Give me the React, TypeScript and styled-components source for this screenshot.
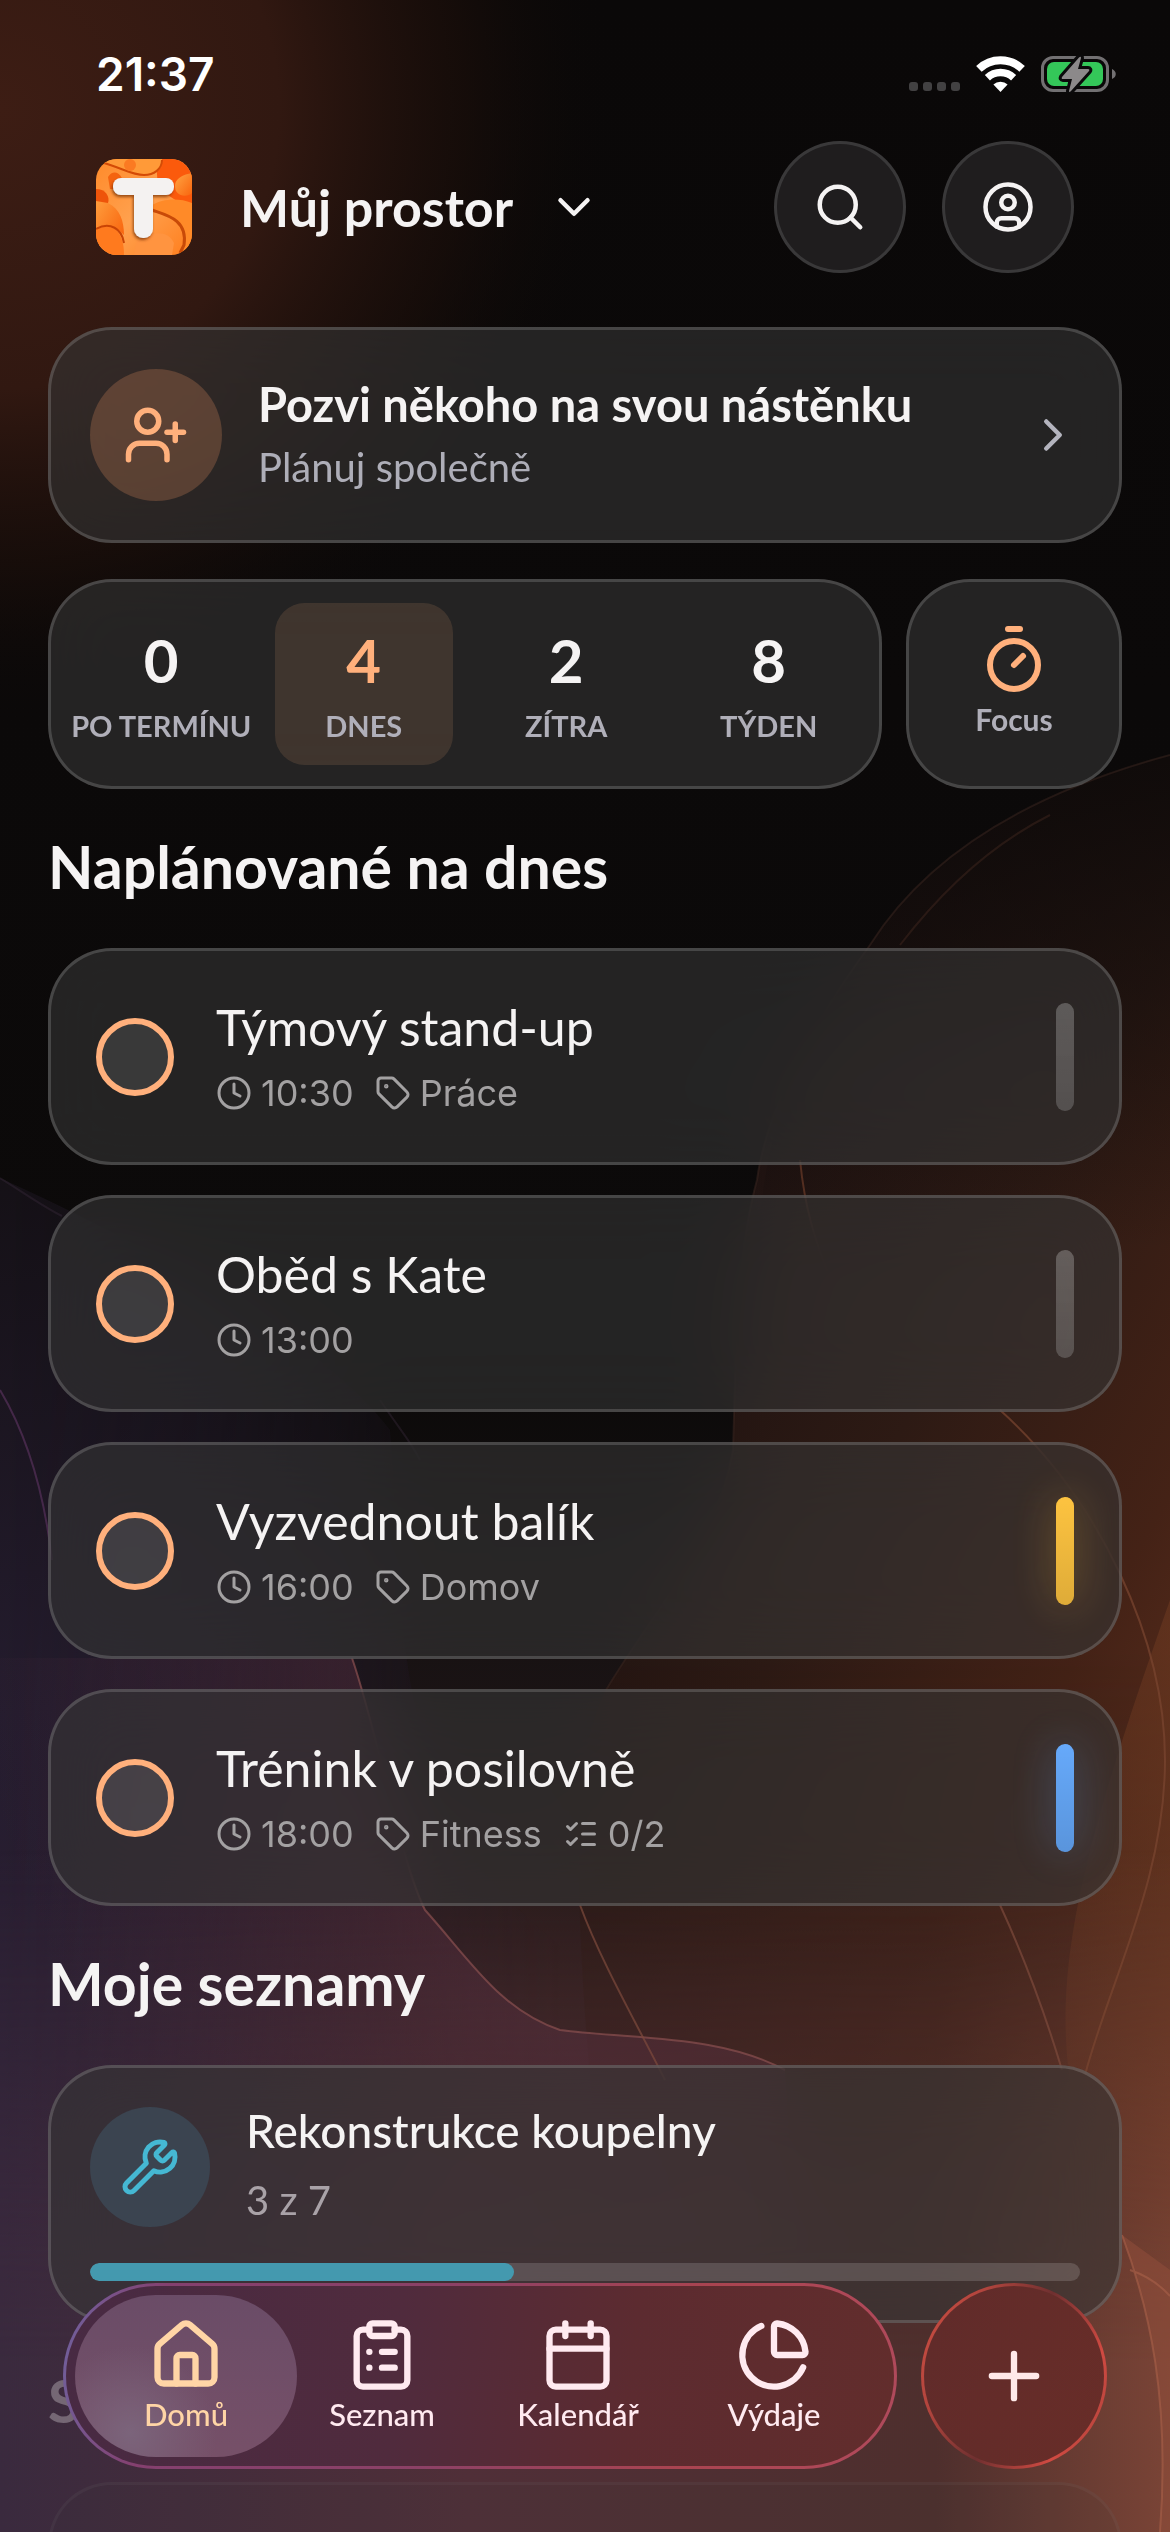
import { useState } from "react";
import styled, { createGlobalStyle, css } from "styled-components";
import {
    Calendar,
    ChartPie,
    ChevronDown,
    ChevronRight,
    CircleUser,
    ClipboardList,
    Clock,
    House,
    ListChecks,
    Plus,
    Search,
    Tag,
    Timer,
    UserPlus,
    Wrench,
} from "lucide-react";

const GlobalStyle = createGlobalStyle`
    * {
        box-sizing: border-box;
    }
    body {
        margin: 0;
        background: #0a0808;
    }
    body, button, input {
        font-family: Lato, "Noto Sans", sans-serif;
    }
    button {
        border: none;
        padding: 0;
        background: none;
        color: inherit;
        cursor: pointer;
    }
    svg {
        display: block;
        flex-shrink: 0;
    }
`;

const glass = css`
    background-color: rgba(54, 54, 54, 0.6);
    border: 3px solid rgba(255, 255, 255, 0.16);
    border-radius: 64px;
    backdrop-filter: blur(36px);
`;

const Page = styled.div`
    position: relative;
    height: 100vh;
    overflow: hidden;
    color: #f5f3f3;
`;

const Backdrop = styled.svg`
    position: absolute;
    inset: 0;
    width: 100%;
    height: 100%;
`;

const Screen = styled.div`
    position: relative;
`;

const StatusBar = styled.div`
    display: flex;
    align-items: center;
    justify-content: space-between;
    height: 141px;
    padding: 6px 54px 0 96px;
`;

const Time = styled.span`
    font-family: Inter, sans-serif;
    font-size: 46px;
    font-weight: 600;
    color: #fff;
`;

const StatusIcons = styled.div`
    display: flex;
    align-items: center;
    gap: 16px;
`;

const Header = styled.header`
    display: flex;
    align-items: center;
    height: 132px;
    padding: 0 96px;
`;

const SpaceButton = styled.button`
    display: flex;
    align-items: center;
    gap: 34px;
    margin-left: 48px;
    font-size: 52px;
    font-weight: 700;
    line-height: 66px;
`;

const HeaderActions = styled.div`
    display: flex;
    gap: 36px;
    margin-left: auto;
`;

const RoundButton = styled.button`
    display: grid;
    place-items: center;
    width: 132px;
    height: 132px;
    border: 3px solid rgba(255, 255, 255, 0.12);
    border-radius: 50%;
    background: rgba(33, 32, 33, 0.9);
`;

const Main = styled.main`
    padding: 54px 48px 0;
`;

const InviteCard = styled.button`
    ${glass}
    display: flex;
    align-items: center;
    width: 100%;
    height: 216px;
    padding: 0 39px;
    text-align: left;
`;

const IconCircle = styled.span<{ $size: number; $bg: string; $color: string }>`
    display: grid;
    place-items: center;
    flex-shrink: 0;
    width: ${(p) => p.$size}px;
    height: ${(p) => p.$size}px;
    border-radius: 50%;
    background: ${(p) => p.$bg};
    color: ${(p) => p.$color};
`;

const InviteText = styled.span`
    display: flex;
    flex: 1;
    flex-direction: column;
    gap: 6px;
    margin-left: 36px;
    padding-bottom: 3px;
`;

const InviteTitle = styled.span`
    font-size: 47px;
    font-weight: 700;
    line-height: 60px;
`;

const Subtitle = styled.span`
    font-size: 40px;
    line-height: 54px;
    color: #aeaeb8;
`;

const Chevron = styled(ChevronRight)`
    color: #b4b4be;
`;

const StatsRow = styled.div`
    display: flex;
    gap: 24px;
    margin-top: 36px;
`;

const StatsCard = styled.div`
    ${glass}
    display: grid;
    grid-template-columns: repeat(4, minmax(0, 1fr));
    gap: 24px;
    flex: 1;
    height: 210px;
    padding: 21px;
`;

const Stat = styled.button<{ $active?: boolean }>`
    display: flex;
    flex-direction: column;
    align-items: center;
    justify-content: center;
    padding-top: 12px;
    border-radius: 30px;
    background: ${(p) => (p.$active ? "rgba(255, 176, 124, 0.13)" : "none")};
    color: ${(p) => (p.$active ? "#ffb07c" : "inherit")};
`;

const StatValue = styled.span`
    font-size: 60px;
    font-weight: 700;
    line-height: 72px;
`;

const StatLabel = styled.span`
    font-size: 29px;
    font-weight: 700;
    line-height: 60px;
    white-space: nowrap;
    color: #b0afb9;
`;

const FocusCard = styled.button`
    ${glass}
    display: flex;
    flex-direction: column;
    align-items: center;
    justify-content: center;
    width: 216px;
    height: 210px;
    padding-bottom: 3px;
    color: #ffb07c;
`;

const FocusLabel = styled(StatLabel)`
    font-size: 30px;
    line-height: 48px;
`;

const SectionTitle = styled.h2<{ $faded?: boolean }>`
    margin: 0;
    padding: 45px 0 48px;
    font-size: 59px;
    font-weight: 700;
    line-height: 66px;
    opacity: ${(p) => (p.$faded ? 0.3 : 1)};
`;

const TaskList = styled.ul`
    display: flex;
    flex-direction: column;
    gap: 30px;
    margin: 0;
    padding: 0;
    list-style: none;
`;

const TaskCard = styled.li`
    ${glass}
    display: flex;
    align-items: center;
    height: 217px;
    padding: 0 45px;
`;

const Check = styled.input`
    appearance: none;
    flex-shrink: 0;
    width: 78px;
    height: 78px;
    margin: 0;
    border: 6px solid #ffb07c;
    border-radius: 50%;
    background: rgba(255, 255, 255, 0.1);

    &:checked {
        background: #ffb07c;
    }
`;

const TaskBody = styled.div`
    display: flex;
    flex: 1;
    flex-direction: column;
    gap: 12px;
    margin-left: 42px;
`;

const TaskTitle = styled.label`
    font-size: 50px;
    line-height: 60px;
`;

const MetaRow = styled.div`
    display: flex;
    gap: 21px;
`;

const Meta = styled.span`
    display: flex;
    align-items: center;
    gap: 9px;
    font-family: Inter, sans-serif;
    font-size: 36px;
    line-height: 48px;
    color: #a3a1a2;
`;

const Priority = styled.span<{ $color?: string }>`
    width: 18px;
    height: 108px;
    border-radius: 9px;
    background: ${(p) => p.$color || "rgba(255, 255, 255, 0.24)"};
    background-image: linear-gradient(rgba(0, 0, 0, 0), rgba(0, 0, 0, 0.12));
    box-shadow: ${(p) => (p.$color ? `0 0 42px ${p.$color}55` : "none")};
`;

const ListCard = styled.article`
    ${glass}
    height: 258px;
    padding: 39px 39px 0;
`;

const ListHead = styled.div`
    display: flex;
    gap: 36px;
    height: 120px;
`;

const ListTitle = styled.h3`
    margin: 0;
    font-size: 46px;
    font-weight: 500;
    line-height: 48px;
`;

const ListCount = styled.p`
    margin: 18px 0 0;
    font-size: 40px;
    line-height: 54px;
    color: #a9a2a8;
`;

const Progress = styled.div`
    height: 18px;
    margin-top: 36px;
    border-radius: 9px;
    background: rgba(255, 255, 255, 0.15);
    overflow: hidden;
`;

const ProgressFill = styled.div`
    height: 100%;
    border-radius: 9px;
    background: #4499af;
`;

const FadedCard = styled.div`
    height: 258px;
    border: 3px solid rgba(255, 255, 255, 0.04);
    border-radius: 64px;
    background: rgba(54, 54, 54, 0.12);
`;

const BottomBar = styled.div`
    position: fixed;
    right: 63px;
    bottom: 63px;
    left: 63px;
    display: flex;
    gap: 24px;
`;

const Tabs = styled.nav`
    display: flex;
    flex: 1;
    height: 186px;
    padding: 9px 22px;
    border: 3px solid transparent;
    border-radius: 93px;
    background:
        linear-gradient(95deg, #482a43 0%, #502b3d 40%, #5c2b30 68%, #622d2c 100%) padding-box,
        linear-gradient(100deg, #6f62a0 0%, #84406f 12%, #8c4166 45%, #a94450 75%, #b04a5c 100%) border-box;
`;

const Tab = styled.a<{ $active?: boolean }>`
    display: flex;
    flex: 1 1 0;
    flex-direction: column;
    align-items: center;
    margin: 0 ${(p) => (p.$active ? "-13px" : "0")};
    padding: 22px ${(p) => (p.$active ? "13px" : "0")} 0;
    border-radius: 81px;
    background: ${(p) =>
        p.$active ? "radial-gradient(circle at 25% 85%, #7b647b, rgba(123, 100, 123, 0) 40%), linear-gradient(#6a4c67, #765068)" : "none"};
    color: ${(p) => (p.$active ? "#ffd5a6" : "#ffeaf0")};
    font-size: 31px;
    font-weight: 500;
    line-height: 36px;
    text-decoration: none;
`;

const AddButton = styled.button`
    display: grid;
    place-items: center;
    width: 186px;
    height: 186px;
    border: 3px solid transparent;
    border-radius: 50%;
    background:
        linear-gradient(110deg, #602b2a, #682d28) padding-box,
        linear-gradient(115deg, #d04f42 0%, #b0443d 25%, #6f3030 50%, #d04a42 78%, #a8423a 100%) border-box;
    color: #ffe9e9;
`;

const TabLabel = styled.span`
    margin-top: 3px;
`;

const Waves = () => (
    <Backdrop viewBox="0 0 1170 2532" preserveAspectRatio="none" aria-hidden="true">
        <defs>
            <radialGradient id="ember" gradientUnits="userSpaceOnUse" cx="0" cy="110" r="620">
                <stop offset="0" stopColor="#3d1d14" />
                <stop offset="0.45" stopColor="#311811" />
                <stop offset="0.75" stopColor="#1a0e0a" stopOpacity="0.7" />
                <stop offset="1" stopColor="#0a0808" stopOpacity="0" />
            </radialGradient>
            <linearGradient id="base" x1="0" y1="0" x2="0" y2="1">
                <stop offset="0" stopColor="#0a0808" />
                <stop offset="0.55" stopColor="#0c0a0a" />
                <stop offset="0.68" stopColor="#1b1415" />
                <stop offset="0.8" stopColor="#33201f" />
                <stop offset="1" stopColor="#4a2c2e" />
            </linearGradient>
            <linearGradient id="violet" gradientUnits="userSpaceOnUse" x1="0" y1="1150" x2="200" y2="2532">
                <stop offset="0" stopColor="#141015" />
                <stop offset="0.4" stopColor="#241c2e" />
                <stop offset="0.65" stopColor="#2c2034" />
                <stop offset="1" stopColor="#422b40" />
            </linearGradient>
            <linearGradient id="fadeRight" gradientUnits="userSpaceOnUse" x1="0" y1="0" x2="560" y2="0">
                <stop offset="0" stopColor="#fff" />
                <stop offset="0.35" stopColor="#bbb" />
                <stop offset="0.75" stopColor="#333" />
                <stop offset="1" stopColor="#000" />
            </linearGradient>
            <mask id="violetMask">
                <rect width="1170" height="2532" fill="url(#fadeRight)" />
            </mask>
            <linearGradient id="rust" gradientUnits="userSpaceOnUse" x1="600" y1="1350" x2="1260" y2="1720">
                <stop offset="0" stopColor="#1c1110" />
                <stop offset="0.4" stopColor="#2d1a14" />
                <stop offset="0.75" stopColor="#442216" />
                <stop offset="1" stopColor="#5b2e1d" />
            </linearGradient>
            <linearGradient id="rustTop" gradientUnits="userSpaceOnUse" x1="0" y1="760" x2="0" y2="1250">
                <stop offset="0" stopColor="#0a0808" stopOpacity="0.8" />
                <stop offset="1" stopColor="#0a0808" stopOpacity="0" />
            </linearGradient>
            <linearGradient id="rustSide" gradientUnits="userSpaceOnUse" x1="0" y1="1650" x2="0" y2="1960">
                <stop offset="0" stopColor="#fff" />
                <stop offset="1" stopColor="#999" />
            </linearGradient>
            <mask id="rustMask">
                <rect width="1170" height="2532" fill="url(#rustSide)" />
            </mask>
            <linearGradient id="floor" gradientUnits="userSpaceOnUse" x1="0" y1="0" x2="1170" y2="0">
                <stop offset="0" stopColor="#3a2a3e" />
                <stop offset="0.4" stopColor="#502f38" />
                <stop offset="0.8" stopColor="#4e2f2d" />
                <stop offset="1" stopColor="#7a4436" />
            </linearGradient>
            <linearGradient id="floorFade" x1="0" y1="0" x2="0" y2="1">
                <stop offset="0" stopColor="#000" />
                <stop offset="0.75" stopColor="#fff" />
            </linearGradient>
            <mask id="floorMask">
                <rect y="1850" width="1170" height="682" fill="url(#floorFade)" />
            </mask>
            <linearGradient id="rose" gradientUnits="userSpaceOnUse" x1="80" y1="2050" x2="520" y2="1900">
                <stop offset="0" stopColor="#5c3044" stopOpacity="0" />
                <stop offset="1" stopColor="#5c3044" stopOpacity="0.5" />
            </linearGradient>
            <linearGradient id="glow" gradientUnits="userSpaceOnUse" x1="900" y1="0" x2="1170" y2="0">
                <stop offset="0" stopColor="#6b3820" stopOpacity="0" />
                <stop offset="1" stopColor="#6b3820" stopOpacity="0.6" />
            </linearGradient>
        </defs>
        <rect width="1170" height="2532" fill="url(#base)" />
        <rect width="700" height="800" fill="url(#ember)" />
        <path
            d="M1170 755C1040 790 930 850 870 945C800 1040 765 1120 757 1180C735 1260 736 1360 733 1450C715 1550 660 1600 606 1690C570 1760 560 1900 640 2532H1170Z"
            fill="url(#rust)"
            mask="url(#rustMask)"
        />
        <path d="M1170 755C1040 790 930 850 870 945C800 1040 765 1120 757 1250H1170Z" fill="url(#rustTop)" />
        <path d="M1170 1600C1100 1800 1050 1950 1070 2080V2300H1170Z" fill="url(#glow)" />
        <path
            d="M0 1178C180 1260 330 1350 390 1430C400 1540 390 1700 460 1840C540 1960 700 2040 800 2080V2532H0Z"
            fill="url(#violet)"
            mask="url(#violetMask)"
        />
        <path d="M352 1658C380 1740 400 1860 425 1910C470 1960 500 2010 560 2030C640 2040 720 2035 785 2070L800 2300L0 2400V1658Z" fill="url(#rose)" />
        <rect y="1850" width="1170" height="682" fill="url(#floor)" mask="url(#floorMask)" />
        <path d="M1122 2235C1150 2310 1170 2400 1160 2532H1170V2270Z" fill="#8e4d3b" opacity="0.6" />
        <g fill="none" strokeWidth="2">
            <path d="M1170 755C1040 790 930 850 870 945C800 1040 765 1120 757 1180C735 1260 736 1360 733 1450C715 1550 660 1600 606 1690" stroke="#3a2620" opacity="0.5" />
            <path d="M900 945C950 880 1000 840 1050 815" stroke="#4a2c22" opacity="0.4" />
            <path d="M800 1160C804 1200 812 1240 840 1300" stroke="#6a3a28" opacity="0.7" />
            <path d="M1000 1410C1100 1500 1165 1640 1165 1760C1165 1880 1110 1980 1085 2075" stroke="#7a4630" opacity="0.7" />
            <path d="M0 1390C30 1440 45 1500 52 1560" stroke="#55305a" opacity="0.7" />
            <path d="M0 1178C20 1190 40 1205 62 1216M380 1400C400 1430 410 1440 420 1460" stroke="#3a2a3c" opacity="0.4" />
            <path d="M352 1658C380 1740 400 1860 425 1910C470 1960 500 2010 560 2030C640 2040 720 2035 785 2070" stroke="#8a5050" opacity="0.7" />
            <path d="M580 1905C600 1960 640 2030 665 2080M1000 1905C1030 1970 1050 2030 1062 2070" stroke="#7d4a3c" opacity="0.7" />
            <path d="M1122 2235C1150 2310 1170 2400 1160 2532M1130 2270C1145 2275 1160 2285 1170 2296" stroke="#a8604a" opacity="0.6" />
        </g>
    </Backdrop>
);

const Logo = () => (
    <svg width="96" height="96" viewBox="0 0 96 96" role="img" aria-label="Logo">
        <defs>
            <linearGradient id="logoBase" x1="0" y1="0" x2="1" y2="1">
                <stop offset="0" stopColor="#ff8a2a" />
                <stop offset="0.5" stopColor="#ffa14e" />
                <stop offset="1" stopColor="#ff7d1c" />
            </linearGradient>
            <linearGradient id="logoFold" x1="0" y1="0" x2="1" y2="1">
                <stop offset="0" stopColor="#ffa543" />
                <stop offset="1" stopColor="#f9650e" />
            </linearGradient>
            <clipPath id="logoClip">
                <rect width="96" height="96" rx="21" />
            </clipPath>
            <filter id="logoShadow" x="-20%" y="-20%" width="140%" height="140%">
                <feDropShadow dx="-1" dy="2" stdDeviation="1.5" floodColor="#6b2500" floodOpacity="0.7" />
            </filter>
        </defs>
        <g clipPath="url(#logoClip)">
            <rect width="96" height="96" fill="url(#logoBase)" />
            <path d="M60 0H96V52C84 44 72 36 62 30Z" fill="#fb5a0c" />
            <path d="M66 0C68 10 58 16 48 16C36 16 28 10 8 4V0Z" fill="#ff9a38" />
            <path d="M8 4C28 10 36 16 48 16C58 16 66 10 66 1" fill="none" stroke="#d44b06" strokeWidth="2" />
            <circle cx="34" cy="6" r="6" fill="#fb7a22" />
            <path d="M12 18C18 8 30 16 26 30H14Z" fill="#f4630f" />
            <path d="M96 14C84 16 76 22 80 32C84 38 92 38 96 34Z" fill="url(#logoFold)" />
            <path d="M0 30C10 30 14 38 12 44C24 50 28 62 28 76C20 68 12 66 0 68Z" fill="url(#logoFold)" />
            <path d="M0 30C10 30 14 38 12 44L0 42Z" fill="#ee540a" />
            <path d="M0 70C14 62 28 70 28 96H0Z" fill="#ff7a1e" />
            <path d="M0 70C14 62 26 70 28 84" fill="none" stroke="#c94405" strokeWidth="2" />
            <path d="M56 52C72 54 90 62 90 84L86 96H96V44C82 38 66 40 56 46Z" fill="#ff8a28" />
            <path d="M56 51C70 56 92 60 88 86L84 94" fill="none" stroke="#c84a08" strokeWidth="3" />
            <path d="M40 84C52 72 72 70 78 84L76 96H38Z" fill="#ff9440" />
        </g>
        <g fill="#f4f2f1" filter="url(#logoShadow)">
            <rect x="17" y="19" width="61" height="17" rx="8" />
            <rect x="38" y="19" width="19" height="60" rx="9" />
        </g>
    </svg>
);

const SignalDots = () => (
    <svg width="51" height="36" viewBox="0 0 51 36" fill="#424142" aria-hidden="true">
        <rect y="26" width="9" height="9" rx="3" />
        <rect x="14" y="26" width="9" height="9" rx="3" />
        <rect x="28" y="26" width="9" height="9" rx="3" />
        <rect x="42" y="26" width="9" height="9" rx="3" />
    </svg>
);

const Wifi = () => (
    <svg width="49" height="36" viewBox="0 0 49 36" aria-hidden="true">
        <path d="M2.9 12.8A31.3 31.3 0 0 1 46.1 12.8" fill="none" stroke="#fff" strokeWidth="8" />
        <path d="M11.4 21.7A19 19 0 0 1 37.6 21.7" fill="none" stroke="#fff" strokeWidth="7.4" />
        <path d="M24.5 36L17.4 28.6A10 10 0 0 1 31.6 28.6Z" fill="#fff" />
    </svg>
);

const Battery = () => (
    <svg width="75" height="38" viewBox="0 0 75 38" aria-hidden="true">
        <rect x="1.5" y="2.5" width="65" height="33" rx="10.5" fill="none" stroke="#727072" strokeWidth="3" />
        <rect x="6" y="7" width="56" height="24" rx="7" fill="#34c759" />
        <path d="M71 14C76 16 76 22 71 24Z" fill="#727072" />
        <path
            d="M38 2.5L21 22Q20 24 22 24H31L28 36Q28 38 30 36L48 16Q49 14 47 14H37L40 3Q40 1 38 2.5Z"
            fill="#8c898a"
            stroke="#0b0a0b"
            strokeWidth="6"
            strokeLinejoin="round"
            paintOrder="stroke"
        />
    </svg>
);

const stats = [
    { value: 0, label: "PO TERMÍNU" },
    { value: 4, label: "DNES" },
    { value: 2, label: "ZÍTRA" },
    { value: 8, label: "TÝDEN" },
];

const tasks = [
    { id: "standup", title: "Týmový stand-up", time: "10:30", tag: "Práce" },
    { id: "lunch", title: "Oběd s Kate", time: "13:00" },
    { id: "parcel", title: "Vyzvednout balík", time: "16:00", tag: "Domov", color: "#fdc340" },
    { id: "gym", title: "Trénink v posilovně", time: "18:00", tag: "Fitness", steps: "0/2", color: "#66a9fa" },
];

const tabs = [
    { label: "Domů", icon: House },
    { label: "Seznam", icon: ClipboardList },
    { label: "Kalendář", icon: Calendar },
    { label: "Výdaje", icon: ChartPie },
];

const App = () => {
    const [range, setRange] = useState("DNES");
    const done = 3;
    const total = 7;

    return (
        <Page>
            <GlobalStyle />
            <Waves />
            <Screen>
                <StatusBar>
                    <Time>21:37</Time>
                    <StatusIcons>
                        <SignalDots />
                        <Wifi />
                        <Battery />
                    </StatusIcons>
                </StatusBar>
                <Header>
                    <Logo />
                    <SpaceButton>
                        Můj prostor
                        <ChevronDown size={54} />
                    </SpaceButton>
                    <HeaderActions>
                        <RoundButton aria-label="Hledat">
                            <Search size={54} />
                        </RoundButton>
                        <RoundButton aria-label="Profil">
                            <CircleUser size={54} />
                        </RoundButton>
                    </HeaderActions>
                </Header>
                <Main>
                    <InviteCard>
                        <IconCircle $size={132} $bg="rgba(255, 160, 105, 0.22)" $color="#ffb07c">
                            <UserPlus size={66} />
                        </IconCircle>
                        <InviteText>
                            <InviteTitle>Pozvi někoho na svou nástěnku</InviteTitle>
                            <Subtitle>Plánuj společně</Subtitle>
                        </InviteText>
                        <Chevron size={54} />
                    </InviteCard>
                    <StatsRow>
                        <StatsCard>
                            {stats.map((s) => (
                                <Stat key={s.label} $active={range === s.label} onClick={() => setRange(s.label)}>
                                    <StatValue>{s.value}</StatValue>
                                    <StatLabel>{s.label}</StatLabel>
                                </Stat>
                            ))}
                        </StatsCard>
                        <FocusCard>
                            <Timer size={72} />
                            <FocusLabel>Focus</FocusLabel>
                        </FocusCard>
                    </StatsRow>
                    <SectionTitle>Naplánované na dnes</SectionTitle>
                    <TaskList>
                        {tasks.map((t) => (
                            <TaskCard key={t.id}>
                                <Check type="checkbox" id={t.id} />
                                <TaskBody>
                                    <TaskTitle htmlFor={t.id}>{t.title}</TaskTitle>
                                    <MetaRow>
                                        <Meta>
                                            <Clock size={36} />
                                            {t.time}
                                        </Meta>
                                        {t.tag && (
                                            <Meta>
                                                <Tag size={36} />
                                                {t.tag}
                                            </Meta>
                                        )}
                                        {t.steps && (
                                            <Meta>
                                                <ListChecks size={36} />
                                                {t.steps}
                                            </Meta>
                                        )}
                                    </MetaRow>
                                </TaskBody>
                                <Priority $color={t.color} />
                            </TaskCard>
                        ))}
                    </TaskList>
                    <SectionTitle>Moje seznamy</SectionTitle>
                    <ListCard>
                        <ListHead>
                            <IconCircle $size={120} $bg="#3b4450" $color="#45b8d3">
                                <Wrench size={60} />
                            </IconCircle>
                            <div>
                                <ListTitle>Rekonstrukce koupelny</ListTitle>
                                <ListCount>
                                    {done} z {total}
                                </ListCount>
                            </div>
                        </ListHead>
                        <Progress role="progressbar" aria-label="Rekonstrukce koupelny" aria-valuenow={done} aria-valuemax={total}>
                            <ProgressFill style={{ width: `${(done / total) * 100}%` }} />
                        </Progress>
                    </ListCard>
                    <SectionTitle $faded>S</SectionTitle>
                    <FadedCard />
                </Main>
            </Screen>
            <BottomBar>
                <Tabs>
                    {tabs.map(({ label, icon: Icon }, i) => (
                        <Tab key={label} href="#" $active={i === 0}>
                            <Icon size={76} />
                            <TabLabel>{label}</TabLabel>
                        </Tab>
                    ))}
                </Tabs>
                <AddButton aria-label="Přidat">
                    <Plus size={76} />
                </AddButton>
            </BottomBar>
        </Page>
    );
};

export default App;
